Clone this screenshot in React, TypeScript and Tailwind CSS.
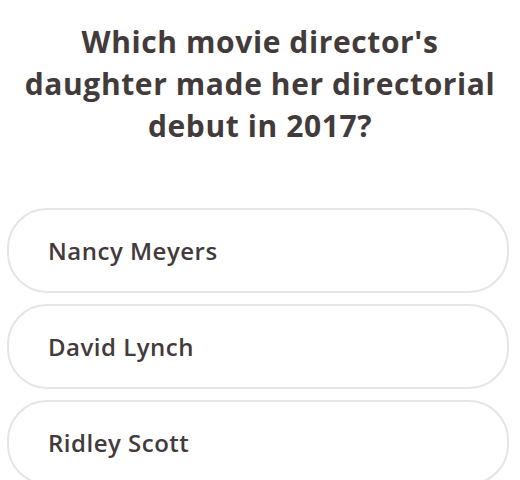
import React from "react";

const options = ["Nancy Meyers", "David Lynch", "Ridley Scott"];

export default function App() {
  return (
    <div
      className="w-[520px] h-[480px] overflow-hidden bg-white text-[#433a3b]"
      style={{ fontFamily: "'Open Sans', 'Noto Sans', sans-serif" }}
    >
      <h1 className="pt-[21px] px-1 text-center text-[30px] leading-[42px] font-bold tracking-[0.6px]">
        Which movie director's
        <br />
        daughter made her directorial
        <br />
        debut in 2017?
      </h1>
      <div className="mt-[61px] flex flex-col gap-[11px] pl-[7px] pr-[11px]">
        {options.map((o) => (
          <div
            key={o}
            className="h-[85px] rounded-[40px] border-2 border-[#e6e4e4] flex items-center pl-[39px] text-[24px] font-semibold tracking-[0.5px]"
          >
            {o}
          </div>
        ))}
      </div>
    </div>
  );
}
